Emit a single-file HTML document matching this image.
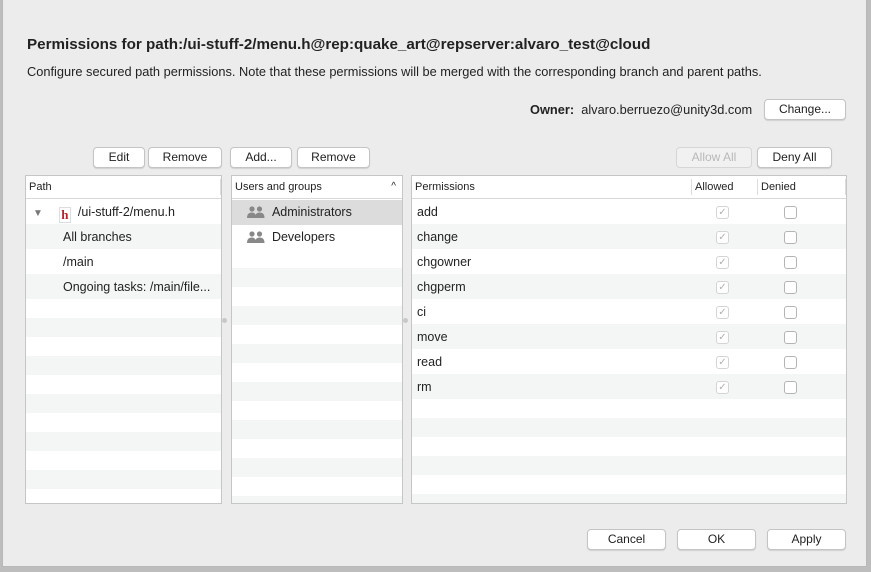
<!DOCTYPE html>
<html><head><meta charset="utf-8"><style>
*{margin:0;padding:0;box-sizing:border-box}
body{width:871px;height:572px;background:#bdbdbd;font-family:"Liberation Sans",sans-serif;position:relative;overflow:hidden;color:#222}
.dlg{position:absolute;left:2px;top:0;width:865px;height:567px;background:#ececec;border:1px solid #b8b8b8;border-top:none}
.a{position:absolute}
.btn{position:absolute;height:21px;background:#fff;border:1px solid #c4c4c4;border-radius:4px;font-size:12px;text-align:center;line-height:19px;color:#222;box-shadow:0 1px 1px rgba(0,0,0,.12)}
.panel{position:absolute;background:#fff;border:1px solid #c6c6c6;overflow:hidden}
.hdr{position:absolute;left:0;right:0;top:0;height:23px;border-bottom:1px solid #d8d8d8;font-size:11px;line-height:22px;background:#fff}
.row{position:absolute;left:0;right:0;font-size:12.5px;line-height:25px}
.g{background:#f4f5f5}
.cb{position:absolute;width:13px;height:13px;border:1px solid #b4b4b4;border-radius:3px;background:#fff}
.cb.on{border-color:#d4d4d4;color:#b0b0b0;font-size:10px;line-height:11px;text-align:center}
.ic{display:inline-block;vertical-align:-2px}
</style></head><body>
<div class="dlg">
<div class="a" style="left:24px;top:36px;font-size:15.2px;font-weight:bold;color:#222">Permissions for path:/ui-stuff-2/menu.h@rep:quake_art@repserver:alvaro_test@cloud</div>
<div class="a" style="left:24px;top:64px;font-size:12.8px">Configure secured path permissions. Note that these permissions will be merged with the corresponding branch and parent paths.</div>
<div class="a" style="left:527px;top:102px;font-size:12.8px"><b>Owner:</b>&nbsp;&nbsp;alvaro.berruezo@unity3d.com</div>
<div class="btn" style="left:761px;top:99px;width:82px">Change...</div>

<div class="btn" style="left:90px;top:147px;width:52px">Edit</div>
<div class="btn" style="left:145px;top:147px;width:74px">Remove</div>
<div class="btn" style="left:227px;top:147px;width:62px">Add...</div>
<div class="btn" style="left:294px;top:147px;width:73px">Remove</div>
<div class="btn" style="left:673px;top:147px;width:76px;color:#b8b8b8;border-color:#d6d6d6;background:#f1f1f1;box-shadow:none">Allow All</div>
<div class="btn" style="left:754px;top:147px;width:75px">Deny All</div>

<div class="panel" style="left:22px;top:175px;width:197px;height:329px">
 <div class="row g" style="top:48px;height:25px"></div>
 <div class="row g" style="top:98px;height:25px"></div>
 <div class="row g" style="top:142px;height:19px"></div>
 <div class="row g" style="top:180px;height:19px"></div>
 <div class="row g" style="top:218px;height:19px"></div>
 <div class="row g" style="top:256px;height:19px"></div>
 <div class="row g" style="top:294px;height:19px"></div>
 <div class="hdr" style="padding-left:3px">Path<span style="position:absolute;right:0;top:3px;height:16px;border-right:1px solid #ddd"></span></div>
 <div class="row" style="top:24px;padding-left:7px"><span style="color:#777;font-size:10px">▼</span><span style="display:inline-block;width:12px;height:16px;border:1px solid #ddd;margin-left:16px;vertical-align:-3px;color:#b3262a;font-family:'Liberation Serif',serif;font-size:13px;line-height:13px;text-align:center;font-weight:bold">h</span><span style="margin-left:7px">/ui-stuff-2/menu.h</span></div>
 <div class="row" style="top:49px;padding-left:37px">All branches</div>
 <div class="row" style="top:74px;padding-left:37px">/main</div>
 <div class="row" style="top:99px;padding-left:37px">Ongoing tasks: /main/file...</div>
</div>
<div class="a" style="left:219px;top:318px;width:5px;height:5px;border-radius:50%;background:#c8c8c8"></div>

<div class="panel" style="left:228px;top:175px;width:172px;height:329px">
 <div class="row" style="top:24px;height:25px;background:#dcdcdc"></div>
 <div class="row g" style="top:92px;height:19px"></div>
 <div class="row g" style="top:130px;height:19px"></div>
 <div class="row g" style="top:168px;height:19px"></div>
 <div class="row g" style="top:206px;height:19px"></div>
 <div class="row g" style="top:244px;height:19px"></div>
 <div class="row g" style="top:282px;height:19px"></div>
 <div class="row g" style="top:320px;height:19px"></div>
 <div class="hdr" style="padding-left:3px">Users and groups<span style="position:absolute;right:6px;top:0;font-size:10px">^</span></div>
 <div class="row" style="top:24px;padding-left:15px"><svg class="ic" width="18" height="12" viewBox="0 0 18 12"><circle cx="5" cy="3" r="2.6" fill="#888"/><circle cx="12.5" cy="3" r="2.6" fill="#888"/><path d="M0 12 Q0 6.5 5 6.5 Q9 6.5 9 12Z M8 12 Q8 6.5 12.5 6.5 Q17.5 6.5 17.5 12Z" fill="#888"/></svg>&nbsp;&nbsp;Administrators</div>
 <div class="row" style="top:49px;padding-left:15px"><svg class="ic" width="18" height="12" viewBox="0 0 18 12"><circle cx="5" cy="3" r="2.6" fill="#888"/><circle cx="12.5" cy="3" r="2.6" fill="#888"/><path d="M0 12 Q0 6.5 5 6.5 Q9 6.5 9 12Z M8 12 Q8 6.5 12.5 6.5 Q17.5 6.5 17.5 12Z" fill="#888"/></svg>&nbsp;&nbsp;Developers</div>
</div>
<div class="a" style="left:400px;top:318px;width:5px;height:5px;border-radius:50%;background:#c8c8c8"></div>

<div class="panel" style="left:408px;top:175px;width:436px;height:329px">
 <div class="row g" style="top:48px;height:25px"></div>
 <div class="row g" style="top:98px;height:25px"></div>
 <div class="row g" style="top:148px;height:25px"></div>
 <div class="row g" style="top:198px;height:25px"></div>
 <div class="row g" style="top:242px;height:19px"></div>
 <div class="row g" style="top:280px;height:19px"></div>
 <div class="row g" style="top:318px;height:19px"></div>
 <div class="hdr" style="padding-left:3px">Permissions
  <span style="position:absolute;left:279px;top:3px;height:16px;border-left:1px solid #ddd;padding-left:3px;line-height:16px">Allowed</span>
  <span style="position:absolute;left:345px;top:3px;height:16px;border-left:1px solid #ddd;padding-left:3px;line-height:16px">Denied</span>
  <span style="position:absolute;left:433px;top:3px;height:16px;border-left:1px solid #ddd"></span></div>
 <div class="row" style="top:24px;padding-left:5px">add</div>
 <div class="row" style="top:49px;padding-left:5px">change</div>
 <div class="row" style="top:74px;padding-left:5px">chgowner</div>
 <div class="row" style="top:99px;padding-left:5px">chgperm</div>
 <div class="row" style="top:124px;padding-left:5px">ci</div>
 <div class="row" style="top:149px;padding-left:5px">move</div>
 <div class="row" style="top:174px;padding-left:5px">read</div>
 <div class="row" style="top:199px;padding-left:5px">rm</div>
 <div class="cb on" style="left:304px;top:30px">✓</div><div class="cb" style="left:372px;top:30px"></div>
 <div class="cb on" style="left:304px;top:55px">✓</div><div class="cb" style="left:372px;top:55px"></div>
 <div class="cb on" style="left:304px;top:80px">✓</div><div class="cb" style="left:372px;top:80px"></div>
 <div class="cb on" style="left:304px;top:105px">✓</div><div class="cb" style="left:372px;top:105px"></div>
 <div class="cb on" style="left:304px;top:130px">✓</div><div class="cb" style="left:372px;top:130px"></div>
 <div class="cb on" style="left:304px;top:155px">✓</div><div class="cb" style="left:372px;top:155px"></div>
 <div class="cb on" style="left:304px;top:180px">✓</div><div class="cb" style="left:372px;top:180px"></div>
 <div class="cb on" style="left:304px;top:205px">✓</div><div class="cb" style="left:372px;top:205px"></div>
</div>

<div class="btn" style="left:584px;top:529px;width:79px">Cancel</div>
<div class="btn" style="left:674px;top:529px;width:79px">OK</div>
<div class="btn" style="left:764px;top:529px;width:79px">Apply</div>
</div>
</body></html>
